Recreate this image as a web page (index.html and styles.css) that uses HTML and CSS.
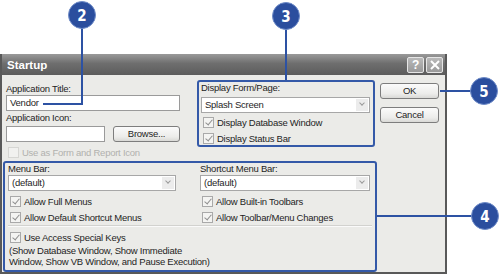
FILE: index.html
```html
<!DOCTYPE html>
<html lang="en">
<head>
    <meta charset="UTF-8">
    <title>Startup</title>
    <link rel="stylesheet" href="styles.css">
</head>
<body>
<div class="page">
    <div class="dialog">
        <div class="titlebar">
            <span class="title">Startup</span>
            <span class="tb-btns">
                <span class="tb-btn help">?</span>
                <span class="tb-btn close">
                    <svg width="10" height="10" viewBox="0 0 10 10"><path d="M1 1L9 9M9 1L1 9" stroke="#fff" stroke-width="2"/></svg>
                </span>
            </span>
        </div>
        <div class="content">
            <div class="main">
                <div class="top">
                    <div class="app-col">
                        <div class="label">Application Title:</div>
                        <div class="input">Vendor</div>
                        <div class="label">Application Icon:</div>
                        <div class="icon-row">
                            <div class="input icon-input"></div>
                            <div class="button browse">Browse...</div>
                        </div>
                        <div class="check disabled"><span class="box"></span>Use as Form and Report Icon</div>
                    </div>
                    <div class="group display-group">
                        <div class="label">Display Form/Page:</div>
                        <div class="select">Splash Screen<span class="arrow"></span></div>
                        <div class="check on"><span class="box"></span>Display Database Window</div>
                        <div class="check on"><span class="box"></span>Display Status Bar</div>
                    </div>
                </div>
                <div class="group menu-group">
                    <div class="menu-cols">
                        <div class="menu-col">
                            <div class="label">Menu Bar:</div>
                            <div class="select">(default)<span class="arrow"></span></div>
                            <div class="check on"><span class="box"></span>Allow Full Menus</div>
                            <div class="check on"><span class="box"></span>Allow Default Shortcut Menus</div>
                        </div>
                        <div class="menu-col right">
                            <div class="label">Shortcut Menu Bar:</div>
                            <div class="select">(default)<span class="arrow"></span></div>
                            <div class="check on"><span class="box"></span>Allow Built-in Toolbars</div>
                            <div class="check on"><span class="box"></span>Allow Toolbar/Menu Changes</div>
                        </div>
                    </div>
                    <div class="separator"></div>
                    <div class="check on"><span class="box"></span>Use Access Special Keys</div>
                    <div class="note">(Show Database Window, Show Immediate<br>Window, Show VB Window, and Pause Execution)</div>
                </div>
            </div>
            <div class="buttons">
                <div class="button">OK</div>
                <div class="button">Cancel</div>
            </div>
        </div>
    </div>

    <!-- callout numbers drawn over the screenshot -->
    <svg class="callouts" width="500" height="276" viewBox="0 0 500 276">
        <g stroke="#2d52a3" stroke-width="2" fill="none">
            <path d="M82 28V104H43"/>
            <path d="M286 29V80"/>
            <path d="M440 91H472"/>
            <path d="M377 216H472"/>
        </g>
        <g class="bubble">
            <circle cx="82" cy="15" r="13.5"/>
            <text x="82" y="20.5">2</text>
        </g>
        <g class="bubble">
            <circle cx="286" cy="16" r="13.5"/>
            <text x="286" y="21.5">3</text>
        </g>
        <g class="bubble">
            <circle cx="484" cy="91" r="13.5"/>
            <text x="484" y="96.5">5</text>
        </g>
        <g class="bubble">
            <circle cx="485" cy="216" r="13.5"/>
            <text x="485" y="221.5">4</text>
        </g>
    </svg>
</div>
</body>
</html>
```

FILE: styles.css
```css
body {
    margin: 0;
    background: #fff;
    font-family: "Liberation Sans", Arial, sans-serif;
    font-size: 9.5px;
    letter-spacing: -0.25px;
    color: #1e1e1e;
}
.page {
    position: relative;
    width: 500px;
    height: 276px;
    padding-top: 54px;
    box-sizing: border-box;
}
.dialog {
    width: 447px;
    height: 220px;
    box-sizing: border-box;
    border: 2px solid #595959;
    border-top: none;
    background: #ebebe8;
}
.titlebar {
    height: 21px;
    display: flex;
    align-items: center;
    justify-content: space-between;
    padding: 0 2px 0 5px;
    background: linear-gradient(#9a9a9a, #6e6e6e 45%, #5c5c5c);
}
.title {
    color: #fff;
    font-weight: bold;
    font-size: 11.5px;
    letter-spacing: 0;
}
.tb-btns {
    display: flex;
    gap: 2px;
}
.tb-btn {
    width: 15px;
    height: 14px;
    border: 1px solid #e6e6e6;
    border-radius: 2px;
    background: linear-gradient(#b9b9b9, #999);
    color: #fff;
    font-size: 12px;
    font-weight: bold;
    line-height: 14px;
    text-align: center;
    display: flex;
    align-items: center;
    justify-content: center;
}
.content {
    display: flex;
    gap: 3px;
    padding-left: 1px;
}
.main {
    width: 374px;
}
.top {
    height: 86px;
    display: flex;
    gap: 17px;
}
.app-col {
    width: 174px;
    margin-left: 3px;
    padding-top: 8px;
}
.label {
    height: 11px;
    line-height: 11px;
    white-space: nowrap;
}
.input {
    height: 16px;
    box-sizing: border-box;
    border: 1px solid #9a9a9a;
    background: #fff;
    padding-left: 3px;
    line-height: 14px;
    margin: 1px 0;
}
.icon-row {
    display: flex;
    justify-content: space-between;
    margin-top: 3px;
}
.icon-input {
    width: 99px;
    margin: 0;
}
.button {
    height: 16px;
    box-sizing: border-box;
    border: 1px solid #7d7d7d;
    border-radius: 3px;
    background: linear-gradient(#fbfbfb, #ececea 70%, #d9d9d6);
    text-align: center;
    line-height: 14px;
}
.browse {
    width: 67px;
}
.check {
    height: 16px;
    display: flex;
    align-items: center;
    white-space: nowrap;
}
.box {
    position: relative;
    width: 9px;
    height: 9px;
    margin: 0 3px 0 2px;
    border: 1px solid #a9a9a9;
    background: #f4f4f2;
}
.check.on .box::after {
    content: "";
    position: absolute;
    left: 3px;
    top: 0;
    width: 3px;
    height: 6px;
    border: solid #8f8f8f;
    border-width: 0 1.5px 1.5px 0;
    transform: rotate(40deg);
}
.check.disabled {
    color: #b1b1ae;
    margin-top: 2px;
}
.check.disabled .box {
    border-color: #d6d6d3;
    background: #f1f1ef;
}
.group {
    box-sizing: border-box;
    border: 2px solid #3459a8;
    border-radius: 3px;
}
.display-group {
    width: 178px;
    height: 67px;
    margin-top: 5px;
    padding: 0 3px 0 2px;
}
.select {
    position: relative;
    height: 16px;
    box-sizing: border-box;
    border: 1px solid #a7a7a7;
    background: #fff;
    padding-left: 3px;
    line-height: 14px;
}
.display-group .select {
    margin: 4px 0 1px;
}
.arrow {
    position: absolute;
    right: 1px;
    top: 1px;
    width: 12px;
    height: 12px;
    background: #ececec;
    border: 0 solid #ddd;
}
.arrow::after {
    content: "";
    position: absolute;
    left: 4px;
    top: 2px;
    width: 3px;
    height: 3px;
    border: solid #9a9a9a;
    border-width: 0 1.5px 1.5px 0;
    transform: rotate(45deg);
}
.menu-group {
    width: 374px;
    height: 111px;
    padding: 0 3px;
}
.menu-cols {
    display: flex;
    gap: 24px;
}
.menu-col {
    width: 168px;
}
.menu-col.right {
    width: 170px;
}
.menu-col .select {
    margin: 1px 0 2px;
}
.separator {
    height: 0;
    border-top: 1px solid #d2d2cf;
    border-bottom: 1px solid #fafafa;
    margin: 0 0 2px;
}
.note {
    line-height: 11px;
    padding-left: 1px;
}
.buttons {
    width: 59px;
    padding-top: 8px;
    display: flex;
    flex-direction: column;
    gap: 8px;
}
.callouts {
    position: absolute;
    left: 0;
    top: 0;
}
.bubble circle {
    fill: #2b4e9e;
    stroke: #6f8cc8;
    stroke-width: 1;
}
.bubble text {
    fill: #fff;
    font-family: "DejaVu Sans Condensed", "Liberation Sans Narrow", sans-serif;
    font-stretch: condensed;
    font-weight: bold;
    font-size: 15px;
    text-anchor: middle;
    letter-spacing: 0;
}
```
